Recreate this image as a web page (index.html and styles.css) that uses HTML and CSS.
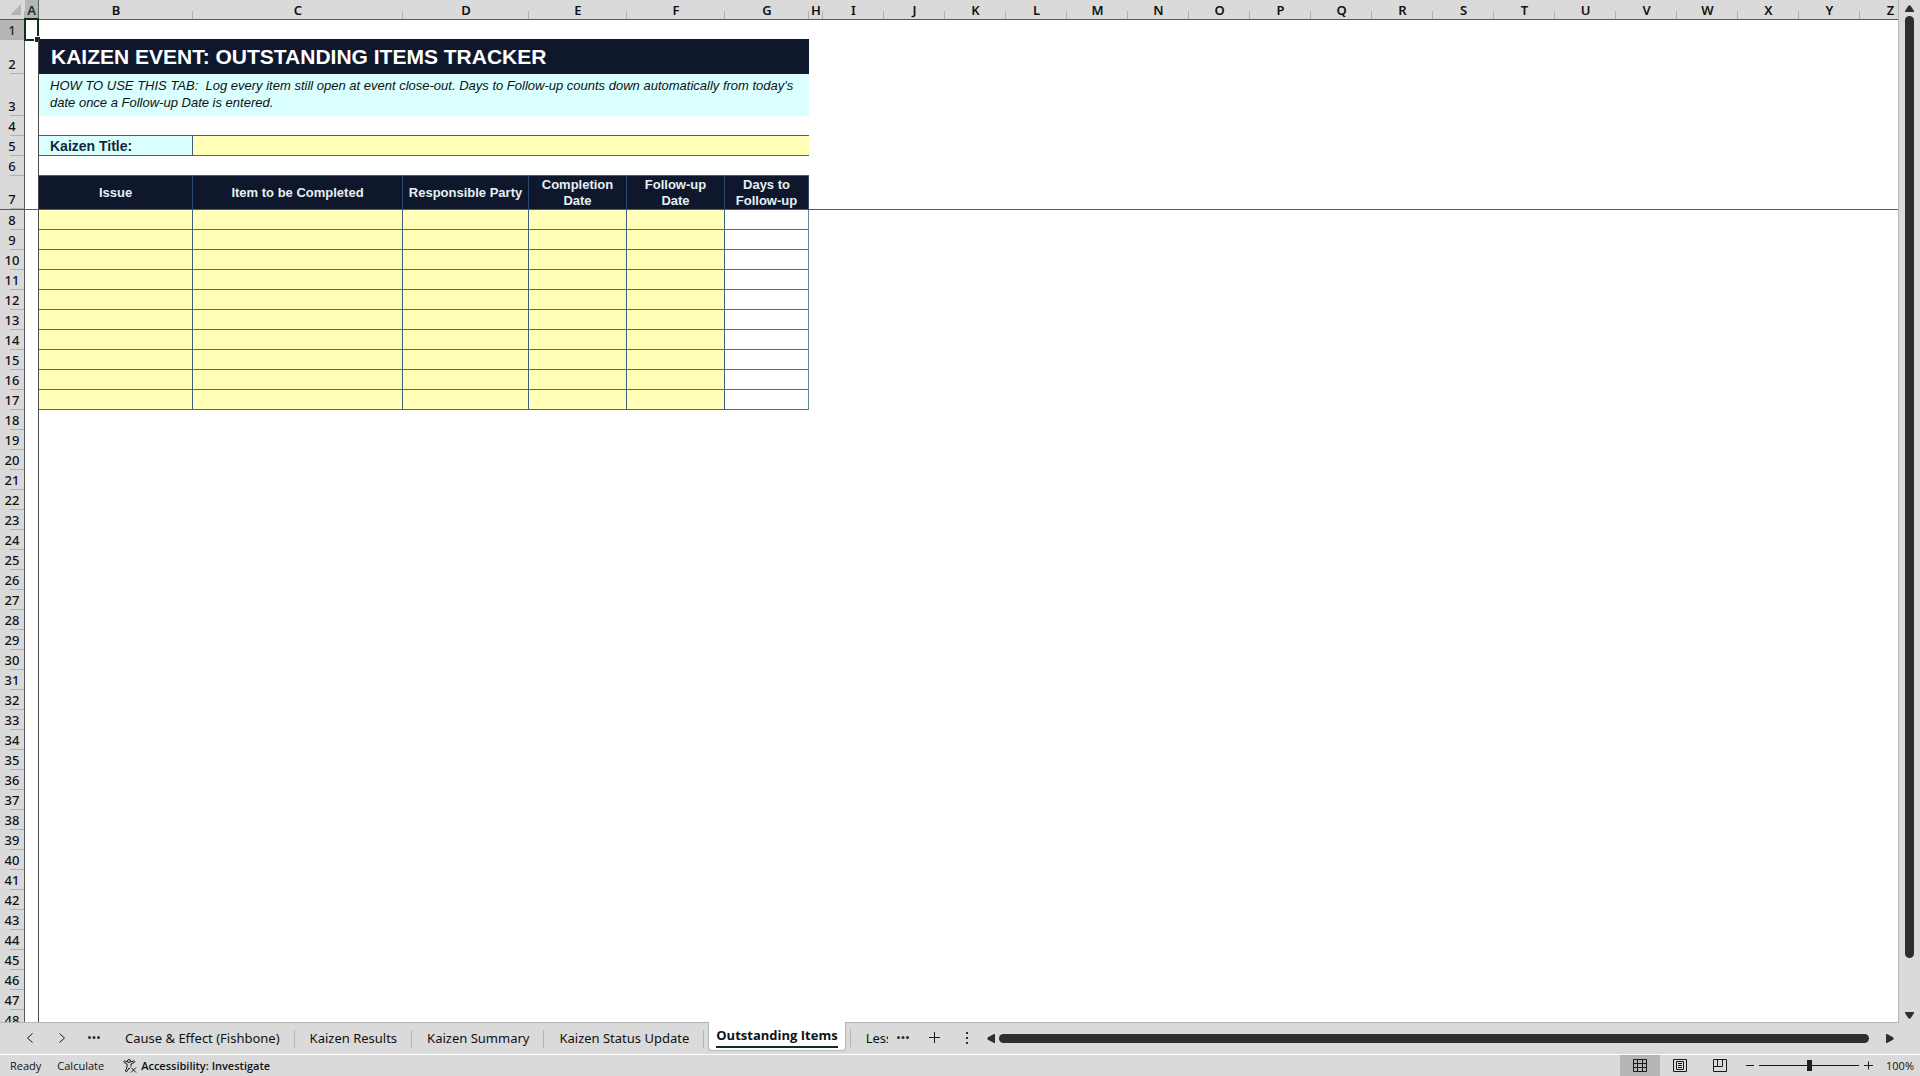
FILE: index.html
```html
<!DOCTYPE html>
<html lang="en">
<head>
    <meta charset="UTF-8">
    <meta name="viewport" content="width=device-width, initial-scale=1.0">
    <title>Kaizen Event: Outstanding Items Tracker</title>
    <link rel="stylesheet" href="styles.css">
</head>
<body>

    <!-- Sheet -->
    <main class="workspace">
        <div class="grid-pane">
            <table class="sheet">
                <colgroup>
                    <col class="col-head">
                    <col class="col-narrow">
                    <col class="col-issue">
                    <col class="col-item">
                    <col class="col-party">
                    <col class="col-date" span="2">
                    <col class="col-days">
                    <col class="col-narrow">
                    <col class="col-default" span="18">
                </colgroup>
                <thead>
                    <tr id="column-letters">
                        <th class="corner"><svg width="11" height="11" viewBox="0 0 11 11"><path d="M11 0V11H0z" fill="#b5b5b5"/></svg></th>
                    </tr>
                </thead>
                <tbody id="rows">
                    <tr>
                        <th class="current">1</th>
                        <td class="freeze"><span class="active-cell"></span></td>
                        <td class="above-title" colspan="6"></td>
                        <td colspan="19"></td>
                    </tr>
                    <tr class="tall">
                        <th>2</th>
                        <td class="freeze"></td>
                        <td class="title" colspan="6">KAIZEN EVENT: OUTSTANDING ITEMS TRACKER</td>
                        <td colspan="19"></td>
                    </tr>
                    <tr class="taller">
                        <th>3</th>
                        <td class="freeze"></td>
                        <td class="help" colspan="6">HOW TO USE THIS TAB:&nbsp; Log every item still open at event close-out. Days to Follow-up counts down automatically from today's date once a Follow-up Date is entered.</td>
                        <td colspan="19"></td>
                    </tr>
                    <tr>
                        <th>4</th>
                        <td class="freeze"></td>
                        <td class="rule" colspan="6"></td>
                        <td colspan="19"></td>
                    </tr>
                    <tr>
                        <th>5</th>
                        <td class="freeze"></td>
                        <td class="label"><label for="kaizen-title">Kaizen Title:</label></td>
                        <td class="entry last" colspan="5"><input type="text" id="kaizen-title"></td>
                        <td colspan="19"></td>
                    </tr>
                    <tr>
                        <th>6</th>
                        <td class="freeze"></td>
                        <td class="rule" colspan="6"></td>
                        <td colspan="19"></td>
                    </tr>
                    <tr class="tall frozen-row">
                        <th>7</th>
                        <td class="freeze"></td>
                        <td class="heading">Issue</td>
                        <td class="heading">Item to be Completed</td>
                        <td class="heading">Responsible Party</td>
                        <td class="heading">Completion Date</td>
                        <td class="heading">Follow-up Date</td>
                        <td class="heading">Days to Follow-up</td>
                        <td colspan="19"></td>
                    </tr>
                </tbody>
            </table>
        </div>
        <div class="scroll-vertical">
            <button type="button" aria-label="Scroll up"><svg width="9" height="7" viewBox="0 0 9 7"><path d="M3.500 0.500H5.500L9 6V7H0V6z"/></svg></button>
            <div class="track"><div class="thumb"></div></div>
            <button type="button" aria-label="Scroll down"><svg width="9" height="7" viewBox="0 0 9 7"><path d="M3.500 6.500H5.500L9 1V0H0V1z"/></svg></button>
        </div>
    </main>

    <!-- Sheet tabs -->
    <nav class="tab-bar">
        <div class="tab-nav">
            <button type="button" aria-label="Previous sheet"><svg width="8" height="10" viewBox="0 0 8 10"><path class="line" d="M6.500 0.500L1.500 5L6.500 9.500"/></svg></button>
            <button type="button" aria-label="Next sheet"><svg width="8" height="10" viewBox="0 0 8 10"><path class="line" d="M1.500 0.500L6.500 5L1.500 9.500"/></svg></button>
            <button type="button" aria-label="More sheets"><svg width="12" height="3" viewBox="0 0 12 3"><circle cx="1.500" cy="1.500" r="1.500"/><circle cx="6" cy="1.500" r="1.500"/><circle cx="10.500" cy="1.500" r="1.500"/></svg></button>
        </div>
        <div class="tabs">
            <button type="button" class="tab">Cause &amp; Effect (Fishbone)</button>
            <button type="button" class="tab">Kaizen Results</button>
            <button type="button" class="tab">Kaizen Summary</button>
            <button type="button" class="tab">Kaizen Status Update</button>
            <button type="button" class="tab selected"><span>Outstanding Items</span></button>
            <button type="button" class="tab cut"><span>Lessons Learned</span></button>
        </div>
        <div class="tab-tools">
            <button type="button" aria-label="More sheets"><svg width="12" height="3" viewBox="0 0 12 3"><circle cx="1.500" cy="1.500" r="1.500"/><circle cx="6" cy="1.500" r="1.500"/><circle cx="10.500" cy="1.500" r="1.500"/></svg></button>
            <button type="button" aria-label="New sheet"><svg width="11" height="11" viewBox="0 0 11 11"><path class="line" d="M5.500 0V11M0 5.500H11"/></svg></button>
            <button type="button" aria-label="Resize tab bar"><svg width="2" height="12" viewBox="0 0 2 12"><path d="M0 0h2v2H0zM0 5h2v2H0zM0 10h2v2H0z"/></svg></button>
        </div>
        <div class="scroll-horizontal">
            <button type="button" aria-label="Scroll left"><svg width="8" height="9" viewBox="0 0 8 9"><path d="M0.500 3.500V5.500L7 9H8V0H7z"/></svg></button>
            <div class="track"><div class="thumb"></div></div>
            <button type="button" aria-label="Scroll right"><svg width="8" height="9" viewBox="0 0 8 9"><path d="M7.500 3.500V5.500L1 9H0V0H1z"/></svg></button>
        </div>
    </nav>

    <!-- Status bar -->
    <footer class="status-bar">
        <span>Ready</span>
        <span>Calculate</span>
        <button type="button" class="accessibility">
            <svg width="14" height="14" viewBox="0 0 14 14"><circle class="line" cx="6" cy="2" r="1.500"/><path class="line" d="M4.500 3L1.500 1.800Q0.200 2.500 1.200 3.500L4 5V8L2.500 12Q3 13.500 4 12.500L6 9L7 10M7.500 3L11 1.800Q12.500 2.500 11.300 3.500L8 5V7.500M8 8.500L13 13.500M13 8.500L8 13.500"/></svg>
            Accessibility: Investigate
        </button>
        <div class="view-buttons">
            <button type="button" class="selected" aria-label="Normal view"><svg width="14" height="13" viewBox="0 0 14 13"><path class="line" d="M0.500 0.500H13.500V12.500H0.500zM0.500 4.500H13.500M0.500 8.500H13.500M4.500 0.500V12.500M9.500 0.500V12.500"/></svg></button>
            <button type="button" aria-label="Page layout"><svg width="14" height="13" viewBox="0 0 14 13"><path class="line" d="M0.500 0.500H13.500V12.500H0.500zM3.500 2.500H10.500V10.500H3.500zM5 4.500H9M5 6.500H9M5 8.500H9"/></svg></button>
            <button type="button" aria-label="Page break preview"><svg width="14" height="13" viewBox="0 0 14 13"><path class="line" d="M0.500 0.500H13.500V12.500H0.500zM4.500 0.500V7.500M0.500 7.500H9.500V0.500"/></svg></button>
        </div>
        <div class="zoom">
            <button type="button" aria-label="Zoom out"><svg width="8" height="9" viewBox="0 0 8 9"><path class="line" d="M0 4.500H8"/></svg></button>
            <input type="range" min="0" max="100" value="50" aria-label="Zoom">
            <button type="button" aria-label="Zoom in"><svg width="9" height="9" viewBox="0 0 9 9"><path class="line" d="M4.500 0.500V8.500M0 4.500H9"/></svg></button>
            <span class="zoom-value">100%</span>
        </div>
    </footer>

    <script>
        const letters = document.getElementById('column-letters');
        for (const letter of 'ABCDEFGHIJKLMNOPQRSTUVWXYZ') {
            const th = document.createElement('th');
            th.textContent = letter;
            if (letter === 'A') {
                th.className = 'current';
            }
            letters.appendChild(th);
        }

        const rows = document.getElementById('rows');
        const fields = ['Issue', 'Item to be Completed', 'Responsible Party', 'Completion Date', 'Follow-up Date'];

        for (let n = 8; n <= 48; n++) {
            let cells = '<td colspan="25"></td>';
            if (n <= 17) {
                cells = fields.map(f => `<td class="entry"><input type="text" aria-label="${f}, row ${n}"></td>`).join('');
                cells += '<td class="result"></td><td colspan="19"></td>';
            }
            rows.insertAdjacentHTML('beforeend', `<tr><th>${n}</th><td class="freeze"></td>${cells}</tr>`);
        }
    </script>

</body>
</html>
```
FILE: styles.css
```css
* {
    box-sizing: border-box;
}

body {
    margin: 0;
    height: 100vh;
    display: flex;
    flex-direction: column;
    overflow: hidden;
    background-color: #dadada;
    color: #111111;
    font-family: "Open Sans", "Noto Sans", sans-serif;
    font-size: 13px;
}

button {
    display: flex;
    align-items: center;
    justify-content: center;
    padding: 0;
    border: none;
    background: none;
    color: inherit;
    font: inherit;
    white-space: nowrap;
}

svg {
    display: block;
    flex: none;
    fill: #2e2e2e;
}

.line {
    fill: none;
    stroke: #1a1a1a;
}

/* Sheet */
.workspace {
    flex: 1;
    min-height: 0;
    display: flex;
}

.grid-pane {
    flex: 1;
    min-width: 0;
    overflow: hidden;
    background-color: #ffffff;
    border-right: 1px solid #b5b5b5;
    border-bottom: 1px solid #b5b5b5;
}

.sheet {
    width: 1921px;
    table-layout: fixed;
    border-collapse: separate;
    border-spacing: 0;
}

.col-head { width: 25px; }
.col-narrow { width: 14px; }
.col-issue { width: 154px; }
.col-item { width: 210px; }
.col-party { width: 126px; }
.col-date { width: 98px; }
.col-days { width: 84px; }
.col-default { width: 61px; }

.sheet tr {
    height: 20px;
}

.sheet tr.tall {
    height: 34px;
}

.sheet tr.taller {
    height: 42px;
}

.sheet th,
.sheet td {
    padding: 0;
}

.sheet th {
    background: linear-gradient(#b0b0b0, #b0b0b0) no-repeat right bottom #dadada;
    font-family: "Noto Sans", sans-serif;
    font-size: 13px;
    font-weight: 600;
    line-height: 18px;
}

.sheet thead th {
    background-size: 1px 8px;
    border-bottom: 1px solid #5a5a5a;
}

.sheet tbody th {
    background-size: 14px 1px;
    border-right: 1px solid #5a5a5a;
    font-weight: 500;
    line-height: 20px;
    vertical-align: bottom;
}

.sheet th.current {
    background-color: #b5b5b5;
    color: #10331a;
}

.sheet thead th.current {
    border-right: 1px solid #5a5a5a;
}

.corner svg {
    margin-left: 10px;
}

.freeze {
    position: relative;
    border-right: 1px solid #4a4a4a;
}

.frozen-row th,
.frozen-row td {
    border-bottom: 1px solid #5a5a5a;
}

.active-cell {
    position: absolute;
    inset: -2px -1px -1px -1px;
    border: 2px solid #0b3316;
}

.active-cell::after {
    content: "";
    position: absolute;
    right: -3px;
    bottom: -3px;
    width: 5px;
    height: 5px;
    background-color: #0b3316;
    border: solid #ffffff;
    border-width: 1px 0 0 1px;
}

.above-title {
    border-bottom: 1px solid #0f172d;
}

.title {
    background-color: #0f172d;
    color: #ffffff;
    font-family: "Liberation Sans", Arial, sans-serif;
    font-size: 21px;
    font-weight: bold;
    line-height: 24px;
}

.sheet .title {
    padding-left: 12px;
}

.help {
    background-color: #d9ffff;
    font-family: "Liberation Sans", Arial, sans-serif;
    font-size: 13px;
    font-style: italic;
    line-height: 17px;
    vertical-align: top;
}

.sheet .help {
    padding: 3px 8px 0 11px;
}

.rule {
    border-bottom: 1px solid #4a5f7a;
}

.label {
    background-color: #d9ffff;
    border-right: 1px solid #3f6080;
    border-bottom: 1px solid #4a5f7a;
    color: #14263a;
    font-family: "Liberation Sans", Arial, sans-serif;
    font-size: 14px;
    font-weight: bold;
    line-height: 18px;
}

.sheet .label {
    padding-left: 11px;
}

.entry {
    background-color: #ffffb8;
    border-right: 1px solid #3f6080;
    border-bottom: 1px solid #4a6f80;
}

.entry.last {
    border-right: none;
}

.entry input {
    display: block;
    width: 100%;
    height: 19px;
    padding: 0 4px;
    border: none;
    outline: none;
    background: none;
    font-family: "Liberation Sans", Arial, sans-serif;
    font-size: 13px;
}

.result {
    border-right: 1px solid #5d8c94;
    border-bottom: 1px solid #4a6f80;
}

.heading {
    background-color: #0f172d;
    border-right: 1px solid #2c4a6b;
    color: #e6f0f2;
    font-family: "Liberation Sans", Arial, sans-serif;
    font-size: 13px;
    font-weight: bold;
    line-height: 16px;
    text-align: center;
}

.sheet .heading {
    padding: 0 4px;
}

.track {
    flex: 1;
    display: flex;
}

.thumb {
    background-color: #2e2e2e;
    border-radius: 5px;
}

.scroll-vertical {
    width: 21px;
    display: flex;
    flex-direction: column;
    align-items: center;
    gap: 4px;
    padding: 5px 0 4px;
}

.scroll-vertical .track {
    flex-direction: column;
}

.scroll-vertical .thumb {
    width: 9px;
    height: 95%;
}

/* Sheet tabs */
.tab-bar {
    height: 32px;
    display: flex;
    border-bottom: 1px solid #ffffff;
}

.tab-nav {
    display: flex;
    padding: 0 0 2px 14px;
}

.tab-nav button {
    width: 32px;
}

.tabs {
    display: flex;
    font-family: "Noto Sans", "Open Sans", sans-serif;
}

.tab {
    height: 32px;
    position: relative;
    padding: 0 15px 2px;
}

.tab:not(.cut)::after {
    content: "";
    position: absolute;
    right: 0;
    top: 7px;
    width: 1px;
    height: 18px;
    background-color: #b5b5b5;
}

.tab.selected {
    height: 29px;
    margin: -1px 5px 0 4px;
    padding: 0 7px;
    background-color: #ffffff;
    border: 1px solid #b5b5b5;
    border-top: none;
    border-radius: 0 0 4px 4px;
    font-family: "Open Sans", sans-serif;
    font-weight: bold;
}

.tab.selected::after {
    right: -6px;
}

.tab.selected span {
    line-height: 22px;
    border-bottom: 2px solid #0b3316;
}

.tab.cut {
    width: 37px;
    justify-content: flex-start;
    padding-right: 0;
}

.tab.cut span {
    overflow: hidden;
}

.tab-tools {
    display: flex;
    padding: 0 0 2px 5px;
}

.tab-tools button {
    width: 20px;
}

.tab-tools button:nth-child(2) {
    width: 44px;
}

.scroll-horizontal {
    flex: 1;
    display: flex;
    align-items: center;
    gap: 4px;
    padding: 0 26px 0 10px;
}

.scroll-horizontal .track {
    padding-right: 13px;
}

.scroll-horizontal .thumb {
    flex: 1;
    height: 9px;
}

/* Status bar */
.status-bar {
    height: 21px;
    display: flex;
    align-items: center;
    padding: 0 6px 0 10px;
    font-size: 11px;
    gap: 16px;
}

.accessibility {
    gap: 4px;
    padding-left: 3px;
    font-weight: 600;
}

.view-buttons {
    align-self: stretch;
    display: flex;
    margin-left: auto;
}

.view-buttons button {
    width: 40px;
}

.view-buttons .selected {
    background-color: #b5b5b5;
}

.zoom {
    display: flex;
    align-items: center;
    gap: 5px;
    margin-left: -10px;
}

.zoom input {
    appearance: none;
    width: 100px;
    height: 11px;
    margin: 0;
    background: linear-gradient(#1a1a1a, #1a1a1a) no-repeat center / 100% 1px;
}

.zoom input::-webkit-slider-thumb {
    appearance: none;
    width: 5px;
    height: 11px;
    background-color: #1f1f24;
}

.zoom-value {
    margin-left: 8px;
}
```
